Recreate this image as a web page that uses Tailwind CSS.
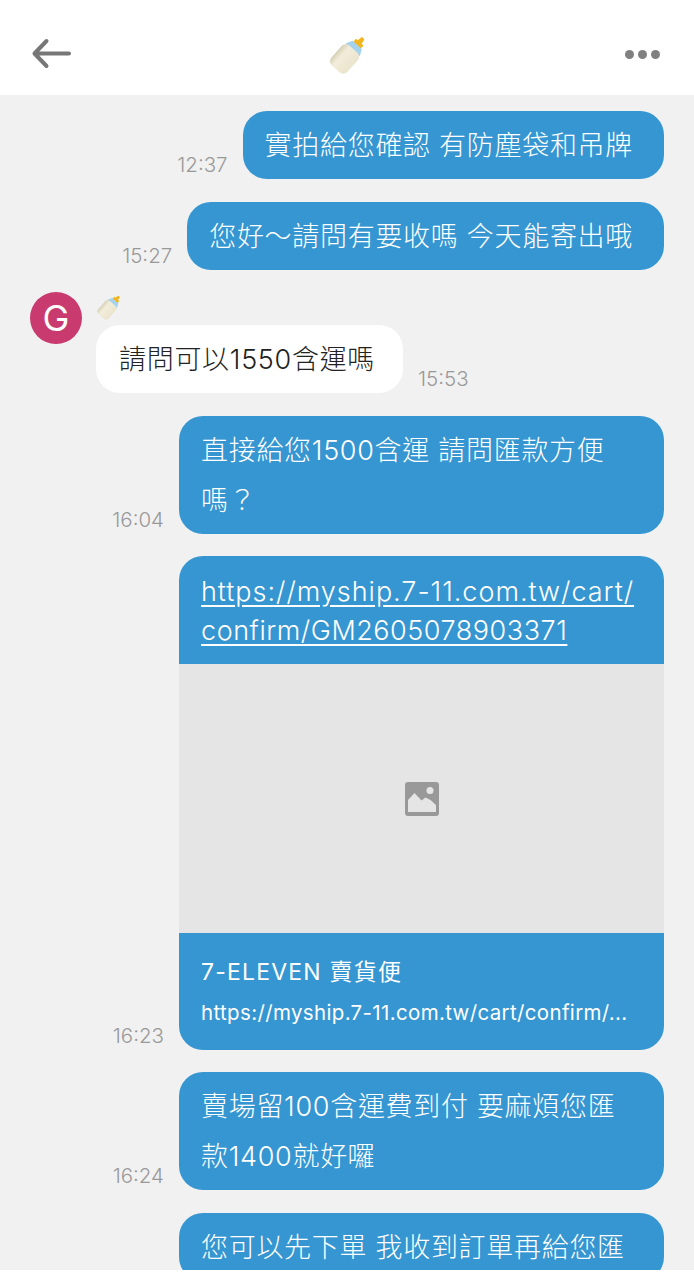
<!DOCTYPE html>
<html lang="zh-Hant">

<head>
    <meta charset="utf-8">
    <title>Chat</title>
    <script src="https://cdn.jsdelivr.net/npm/@tailwindcss/browser@4"></script>
</head>

<body class="bg-white">
    <svg class="absolute w-0 h-0" xmlns="http://www.w3.org/2000/svg">
        <defs>
            <linearGradient id="milk" x1="0" x2="1" y1="0" y2="0">
                <stop offset="0" stop-color="#d6cfb6" />
                <stop offset="0.3" stop-color="#f2edda" />
                <stop offset="1" stop-color="#ebe4cd" />
            </linearGradient>
        </defs>
        <symbol id="bottle" viewBox="0 0 36 38" overflow="visible">
            <g transform="rotate(42 18 19)">
                <path d="M16.200 .5c0-1.400 3.600-1.400 3.600 0l.5 3.700h2.200v3.800h-8.900V4.200h2.100z" fill="#f3b61f" />
                <path d="M12.500 7.500h11l3 6H9.500z" fill="#a5d2ec" />
                <rect x="8.500" y="12.500" width="19" height="23.500" rx="5" fill="url(#milk)" />
            </g>
        </symbol>
    </svg>

    <div class="h-[1279px] flex flex-col overflow-hidden font-['Inter','Noto_Sans_CJK_TC',sans-serif] font-light">
        <header class="h-[95px] shrink-0 flex items-center justify-between pt-[13px] pl-[31px] pr-[34px] bg-white">
            <svg class="w-[41px] h-[32px]" viewBox="0 0 41 32" fill="none" stroke="#777" stroke-width="4" stroke-linecap="round" stroke-linejoin="round">
                <path d="M38 15.500H4M15.500 3 3.500 15.500 15.500 28" />
            </svg>
            <svg class="w-[41px] h-[43px]">
                <use href="#bottle" />
            </svg>
            <div class="flex gap-[4px]">
                <span class="w-[9px] h-[9px] rounded-full bg-[#808080]"></span>
                <span class="w-[9px] h-[9px] rounded-full bg-[#808080]"></span>
                <span class="w-[9px] h-[9px] rounded-full bg-[#808080]"></span>
            </div>
        </header>

        <main class="flex-1 min-h-0 overflow-hidden bg-[#f1f1f1] pt-[16px] pl-[30px] pr-[30px] flex flex-col gap-[22.5px] text-[27px] leading-[50px] tracking-[0.7px] text-white">
            <div class="flex justify-end items-end gap-[15px]">
                <span class="text-[20.500px] leading-[28px] tracking-normal text-[#999]">12:37</span>
                <div class="bg-[#3596d2] rounded-[24px] pl-[22px] pr-[31px] pt-[10px] pb-[8px]">實拍給您確認 有防塵袋和吊牌</div>
            </div>

            <div class="flex justify-end items-end gap-[15px]">
                <span class="text-[20.500px] leading-[28px] tracking-normal text-[#999]">15:27</span>
                <div class="bg-[#3596d2] rounded-[24px] pl-[22px] pr-[31px] pt-[10px] pb-[8px]">您好～請問有要收嗎 今天能寄出哦</div>
            </div>

            <div class="flex gap-[14px]">
                <div class="w-[52px] h-[52px] rounded-full bg-[#c93a6e] flex items-center justify-center text-[36px] tracking-normal font-normal leading-none">G</div>
                <div class="flex flex-col">
                    <svg class="w-[27px] h-[28px] mt-[1px] mb-[4px]">
                        <use href="#bottle" />
                    </svg>
                    <div class="flex items-end gap-[15px]">
                        <div class="bg-white rounded-[24px] pl-[23px] pr-[28px] pt-[10px] pb-[8px] text-[#222]">請問可以1550含運嗎</div>
                        <span class="text-[20.500px] leading-[28px] tracking-normal text-[#999]">15:53</span>
                    </div>
                </div>
            </div>

            <div class="flex justify-end items-end gap-[15px]">
                <span class="text-[20.500px] leading-[28px] tracking-normal text-[#999]">16:04</span>
                <div class="w-[485px] bg-[#3596d2] rounded-[24px] pl-[22px] pr-[31px] pt-[10px] pb-[8px]">直接給您1500含運 請問匯款方便嗎？</div>
            </div>

            <div class="flex justify-end items-end gap-[15px]">
                <span class="text-[20.500px] leading-[29px] tracking-normal text-[#999]">16:23</span>
                <div class="w-[485px] bg-[#3596d2] rounded-[24px] overflow-hidden">
                    <div class="h-[107.800px] px-[22px] pt-[16px] leading-[39px] underline underline-offset-[4px] whitespace-nowrap">
                        <div class="tracking-[0.97px]">https://myship.7-11.com.tw/cart/</div>
                        <div class="tracking-[0.53px]">confirm/GM2605078903371</div>
                    </div>
                    <div class="h-[269px] bg-[#e5e5e5] flex items-center justify-center">
                        <svg class="w-[34px] h-[34px] mt-[1px]" viewBox="0 0 34 34">
                            <rect width="34" height="34" rx="3" fill="#999" />
                            <circle cx="25" cy="8.500" r="3.500" fill="#e5e5e5" />
                            <path d="M3 30V18l6.500-7 7 7.500 4-3 5 2.500 5.500 5v7z" fill="#e5e5e5" />
                        </svg>
                    </div>
                    <div class="h-[117px] px-[22px] pt-[22px]">
                        <div class="text-[23px] leading-[34px] tracking-[1.2px] font-normal">7-ELEVEN 賣貨便</div>
                        <div class="text-[20.500px] leading-[30px] tracking-[0.35px] mt-[9px] font-normal whitespace-nowrap">https://myship.7-11.com.tw/cart/confirm/...</div>
                    </div>
                </div>
            </div>

            <div class="flex justify-end items-end gap-[15px]">
                <span class="text-[20.500px] leading-[28px] tracking-normal text-[#999]">16:24</span>
                <div class="w-[485px] bg-[#3596d2] rounded-[24px] pl-[22px] pr-[31px] pt-[10px] pb-[8px]">賣場留100含運費到付 要麻煩您匯款1400就好囉</div>
            </div>

            <div class="flex justify-end items-end gap-[15px]">
                <div class="w-[485px] shrink-0 bg-[#3596d2] rounded-[24px] pl-[22px] pr-[31px] pt-[10px] pb-[8px]">您可以先下單 我收到訂單再給您匯</div>
            </div>
        </main>

        <div class="h-[9px] shrink-0 bg-white"></div>
    </div>
</body>

</html>
